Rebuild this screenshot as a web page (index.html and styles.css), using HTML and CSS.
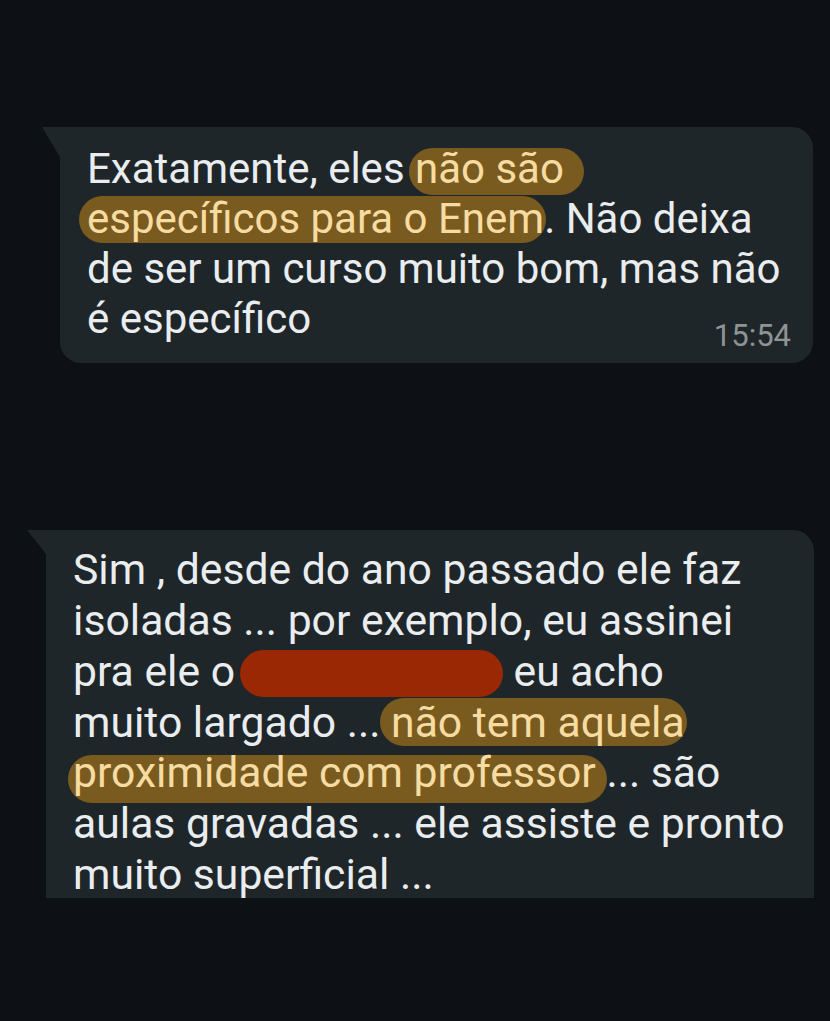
FILE: index.html
```html
<!DOCTYPE html>
<html lang="pt">
<head>
<meta charset="utf-8">
<title>Mensagens</title>
<link rel="stylesheet" href="styles.css">
</head>
<body>
<main class="chat">
  <div class="bubble bubble-one">
    <span class="marker mk-a"></span>
    <span class="marker mk-b"></span>
    <p class="msg msg-one">Exatamente, eles <span class="hl">não são</span><br><span class="hl">específicos para o Enem</span>. Não deixa<br>de ser um curso muito bom, mas não<br>é específico</p>
    <span class="time">15:54</span>
  </div>
  <div class="bubble bubble-two">
    <span class="marker mk-c"></span>
    <span class="marker mk-d"></span>
    <p class="msg msg-two">Sim , desde do ano passado ele faz<br>isoladas ... por exemplo, eu assinei<br>pra ele o<span class="redact"></span> eu acho<br>muito largado ... <span class="hl">não tem aquela</span><br><span class="hl">proximidade com professor</span> ... são<br>aulas gravadas ... ele assiste e pronto<br>muito superficial ...</p>
  </div>
</main>
</body>
</html>
```

FILE: styles.css
```css
html, body {
  margin: 0;
  padding: 0;
  background: #0d1116;
}

body {
  width: 830px;
  height: 1021px;
  overflow: hidden;
  font-family: Roboto, "Noto Sans", sans-serif;
  color: #eaedef;
}

.chat {
  display: flex;
  flex-direction: column;
}

.bubble {
  position: relative;
  background: #1f2629;
  box-sizing: border-box;
}

.bubble::before {
  content: "";
  position: absolute;
  top: 0;
  background: #1f2629;
  clip-path: polygon(0 0, 100% 0, 100% 100%);
}

.bubble-one {
  margin: 127px 0 0 60px;
  width: 753px;
  height: 236px;
  border-radius: 0 21px 21px 21px;
  padding: 17px 22px 0 27px;
  display: flex;
  flex-direction: column;
}

.bubble-one::before {
  left: -18px;
  width: 18px;
  height: 30px;
}

.bubble-two {
  margin: 167px 0 0 46px;
  width: 768px;
  height: 368px;
  border-radius: 0 21px 0 0;
  padding: 14px 20px 0 27px;
}

.bubble-two::before {
  left: -19px;
  width: 19px;
  height: 24px;
}

/* highlighter strokes drawn over the screenshot */
.marker {
  position: absolute;
  background: #7a5b1f;
  border-radius: 24px;
}

.mk-a { left: 349px; top: 21px; width: 175px; height: 47px; }
.mk-b { left: 19px; top: 69px; width: 467px; height: 47px; }
.mk-c { left: 334px; top: 168px; width: 307px; height: 48px; }
.mk-d { left: 22px; top: 225px; width: 539px; height: 48px; }

.msg {
  position: relative;
  margin: 0;
  white-space: nowrap;
}

.msg-one {
  font-size: 42px;
  line-height: 50px;
}

.msg-two {
  font-size: 42.7px;
  line-height: 50.8px;
  height: 354px;
  overflow: hidden;
}

.hl {
  color: #f6dca2;
}

.redact {
  display: inline-block;
  width: 263px;
  height: 47px;
  border-radius: 24px;
  background: #9a2805;
  vertical-align: -11px;
  margin-left: 5px;
}

.time {
  position: relative;
  align-self: flex-end;
  margin-top: -26px;
  font-size: 31px;
  line-height: 36px;
  color: #8e9396;
}
```
